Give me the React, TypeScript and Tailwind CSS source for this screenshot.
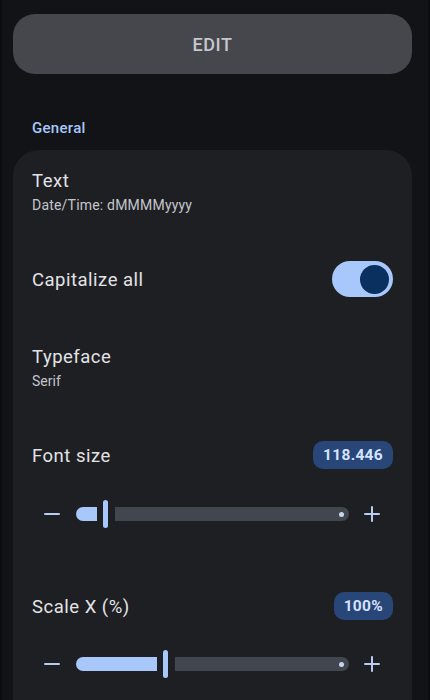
import React from "react";

function Slider({ fill }: { fill: number }) {
  return (
    <div className="ml-3 mr-[13px] flex h-7 items-center">
      <svg width="16" height="16" viewBox="0 0 16 16" className="shrink-0">
        <path d="M1 8h14" stroke="#b7cbf3" strokeWidth="2" strokeLinecap="round" />
      </svg>
      <div className="ml-4 flex h-7 flex-1 items-center">
        <div className="h-[14px] shrink-0 rounded-l-full rounded-r-[3px] bg-[#a8c7fa]" style={{ width: fill }} />
        <div className="ml-[6px] h-7 w-[5px] shrink-0 rounded-full bg-[#a8c7fa]" />
        <div className="ml-[7px] flex h-[14px] flex-1 items-center justify-end rounded-l-[3px] rounded-r-full bg-[#42464e] pr-[5px]">
          <span className="h-[5px] w-[5px] rounded-full bg-[#c7d5f0]" />
        </div>
      </div>
      <svg width="16" height="16" viewBox="0 0 16 16" className="ml-[15px] shrink-0">
        <path d="M1 8h14M8 1v14" stroke="#b7cbf3" strokeWidth="2" strokeLinecap="round" />
      </svg>
    </div>
  );
}

function ValueRow({ label, value }: { label: string; value: string }) {
  return (
    <div className="flex h-7 items-center justify-between">
      <span className="pt-1 text-[18.5px] tracking-[0.5px] text-[#e3e3e7]">{label}</span>
      <span className="rounded-[10px] bg-[#284677] px-[10px] text-[15.5px] font-bold leading-7 tracking-[0.3px] text-[#d5e3ff]">
        {value}
      </span>
    </div>
  );
}

export default function App() {
  return (
    <div className="h-[700px] overflow-hidden border-x-2 border-[#0c0d10] bg-[#121317] pl-[11px] pr-4 pt-[14px] font-['Roboto',sans-serif]">
      <button className="flex h-[60px] w-full items-center justify-center rounded-[22px] bg-[#45474d] text-[18px] font-medium tracking-[0.6px] text-[#c7c8cd]">
        EDIT
      </button>

      <div className="mt-[44px] px-[19px] text-[15px] font-medium leading-5 tracking-[0.3px] text-[#a8c7fa]">General</div>

      <div className="mt-3 h-[600px] rounded-[26px] bg-[#1e1f23] px-[19px] pt-[19px]">
        <div>
          <div className="text-[18.5px] leading-6 tracking-[0.5px] text-[#e3e3e7]">Text</div>
          <div className="mt-[2px] text-[14px] leading-5 tracking-[0.2px] text-[#c4c6cc]">Date/Time: dMMMMyyyy</div>
        </div>

        <div className="mt-[46px] flex h-9 items-center justify-between">
          <span className="pt-1 text-[18.5px] tracking-[0.5px] text-[#e3e3e7]">Capitalize all</span>
          <div className="flex h-9 w-[61px] items-center justify-end rounded-full bg-[#a8c7fa] pr-[4px]">
            <span className="h-[29px] w-[29px] rounded-full bg-[#0a305f]" />
          </div>
        </div>

        <div className="mt-[48px]">
          <div className="text-[18.5px] leading-6 tracking-[0.5px] text-[#e3e3e7]">Typeface</div>
          <div className="mt-[2px] text-[14px] leading-5 text-[#c4c6cc]">Serif</div>
        </div>

        <div className="mt-[50px]">
          <ValueRow label="Font size" value="118.446" />
        </div>
        <div className="mt-[31px]">
          <Slider fill={21} />
        </div>

        <div className="mt-[64px]">
          <ValueRow label="Scale X (%)" value="100%" />
        </div>
        <div className="mt-[30px]">
          <Slider fill={81} />
        </div>
      </div>
    </div>
  );
}
